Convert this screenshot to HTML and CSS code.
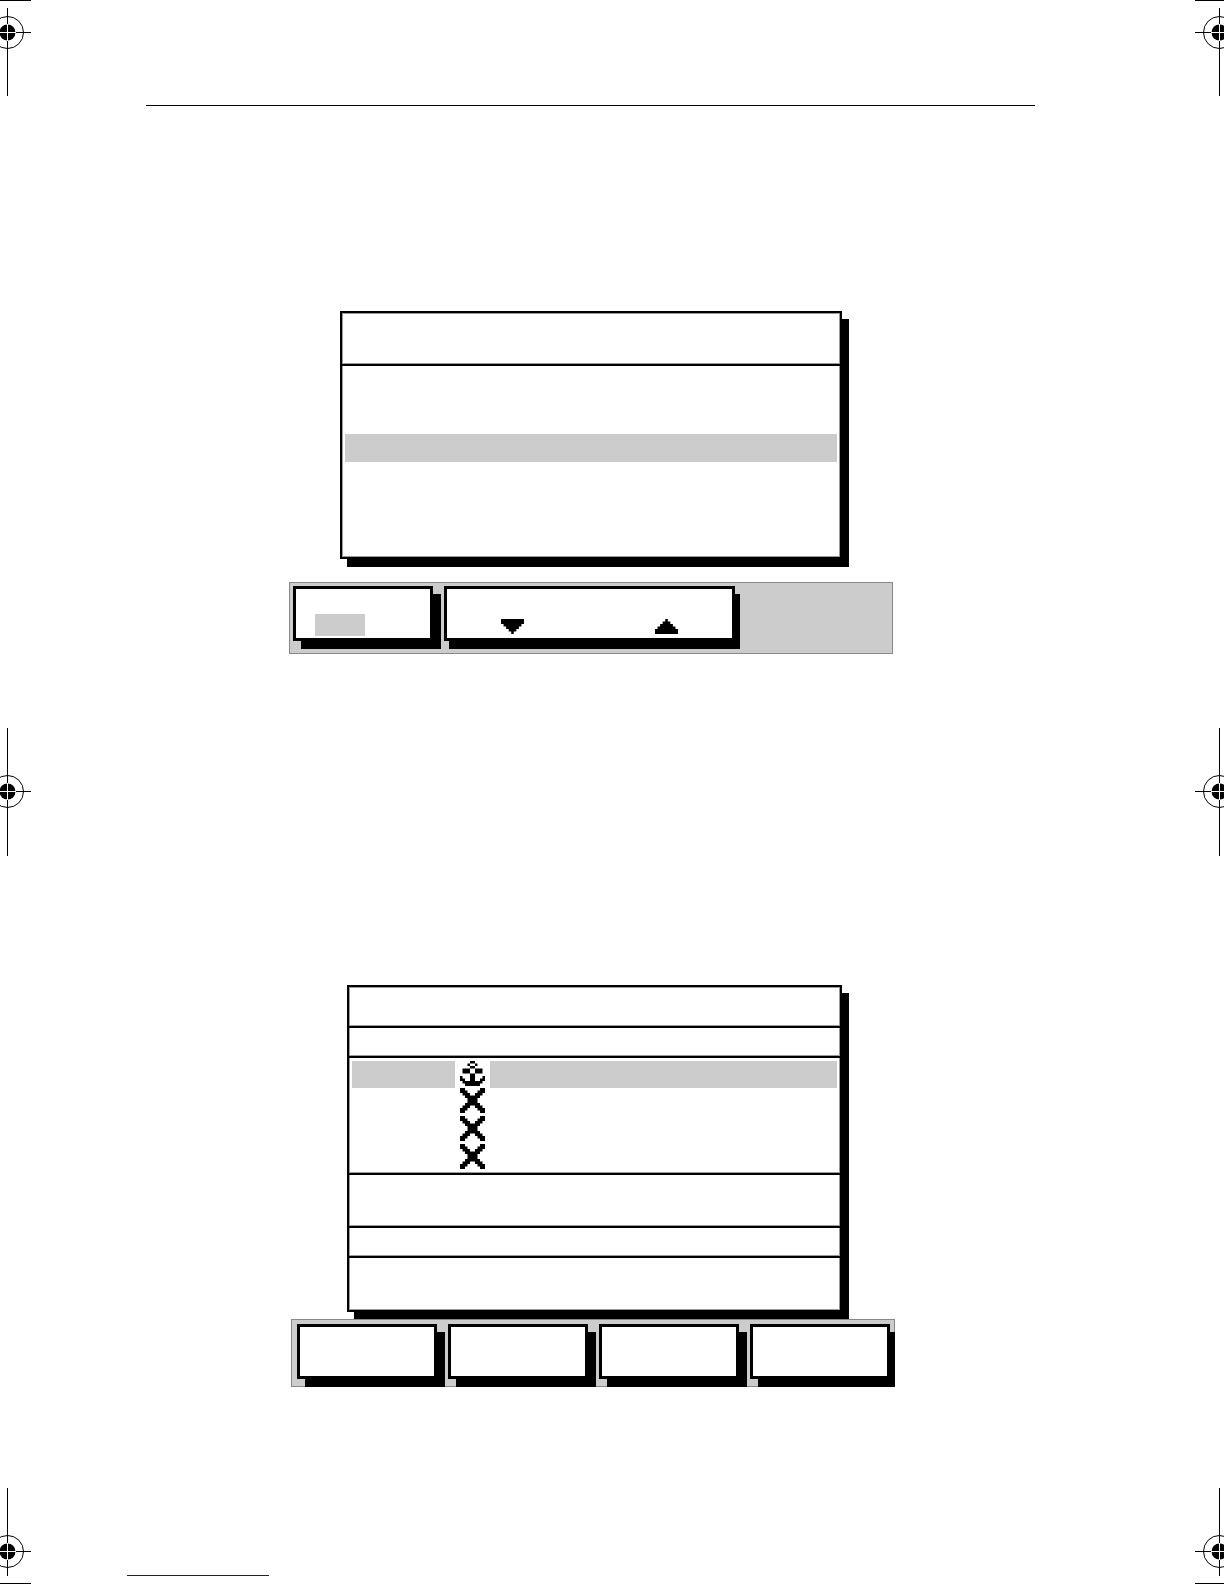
FILE: index.html
```
<!DOCTYPE html>
<html lang="en">
<head>
    <meta charset="UTF-8">
    <meta name="viewport" content="width=device-width, initial-scale=1.0">
    <title>Display Screens</title>
    <link rel="stylesheet" href="styles.css">
</head>
<body>
    <!-- Shared shapes -->
    <svg class="shapes" aria-hidden="true">
        <symbol id="target" overflow="visible">
            <circle cx="0.5" cy="0.5" r="16" fill="none" stroke="#000"/>
            <circle cx="0.5" cy="0.5" r="8"/>
            <path d="M-24 0H-8V1H-24zM9 0H24V1H9z"/>
            <path d="M-8 0H9V1H-8zM0 -8H1V9H0z" fill="#fff"/>
        </symbol>
        <symbol id="cross" viewBox="0 0 10 10">
            <path d="M0 0h2v1h1v1h1v1h2v-1h1v-1h1v-1h2v2h-1v1h-1v1h-1v2h1v1h1v1h1v2h-2v-1h-1v-1h-1v-1h-2v1h-1v1h-1v1h-2v-2h1v-1h1v-1h1v-2h-1v-1h-1v-1h-1z"/>
        </symbol>
    </svg>

    <div class="page">
        <div class="marks">
            <svg width="31" height="96" viewBox="-7 -32 31 96">
                <path d="M-7 -32H24V-31H-7zM0 -24H1V-8H0zM0 9H1V64H0z"/>
                <use href="#target"/>
            </svg>
            <svg width="31" height="128" viewBox="-7 -63 31 128">
                <path d="M0 -63H1V-8H0zM0 9H1V65H0z"/>
                <use href="#target"/>
            </svg>
            <svg width="31" height="96" viewBox="-7 -63 31 96">
                <path d="M-7 32H24V33H-7zM0 -63H1V-8H0zM0 9H1V25H0z"/>
                <use href="#target"/>
            </svg>
        </div>

        <main class="sheet">
            <header class="sheet-header"></header>

            <section class="screen screen-setup">
                <div class="panel">
                    <div class="panel-title"></div>
                    <div class="panel-body">
                        <div class="selected-row"></div>
                    </div>
                </div>
                <div class="softkeys">
                    <button type="button" class="softkey" aria-label="Toggle"><span class="option"></span></button>
                    <button type="button" class="softkey softkey-wide" aria-label="Down or up">
                        <svg class="arrow" viewBox="0 0 9 6" preserveAspectRatio="none"><path d="M0 0H9V2H8V3H7V4H6V5H5V6H4V5H3V4H2V3H1V2H0z"/></svg>
                        <svg class="arrow" viewBox="0 0 9 6" preserveAspectRatio="none"><path d="M0 6H9V4H8V3H7V2H6V1H5V0H4V1H3V2H2V3H1V4H0z"/></svg>
                    </button>
                </div>
            </section>

            <section class="screen screen-list">
                <div class="panel">
                    <div class="list-title"></div>
                    <div class="list-head"></div>
                    <ul class="list">
                        <li class="list-row selected">
                            <svg class="symbol" viewBox="0 0 10 10"><path d="M4 0h2v1h-2zM3 1h1v1h-1zM6 1h1v1h-1zM4 2h2v1h-2zM1 3h3v2h-3zM6 3h3v2h-3zM4 5h2v3h-2zM0 6h1v1h1v1h6v-1h1v-1h1v2h-1v1h-1v1h-6v-1h-1v-1h-1z"/></svg>
                        </li>
                        <li class="list-row"><svg class="symbol"><use href="#cross"/></svg></li>
                        <li class="list-row"><svg class="symbol"><use href="#cross"/></svg></li>
                        <li class="list-row"><svg class="symbol"><use href="#cross"/></svg></li>
                    </ul>
                    <div class="list-detail"></div>
                    <div class="list-head"></div>
                    <div class="list-footer"></div>
                </div>
                <div class="softkeys">
                    <button type="button" class="softkey" aria-label="Key 1"></button>
                    <button type="button" class="softkey" aria-label="Key 2"></button>
                    <button type="button" class="softkey" aria-label="Key 3"></button>
                    <button type="button" class="softkey" aria-label="Key 4"></button>
                </div>
            </section>

            <footer class="sheet-footer">
                <a href="#" class="footer-link" aria-label="Top of page"></a>
            </footer>
        </main>

        <div class="marks">
            <svg width="29" height="96" viewBox="-24 -32 29 96">
                <path d="M-24 -32H5V-31H-24zM0 -24H1V-8H0zM0 9H1V64H0z"/>
                <use href="#target"/>
            </svg>
            <svg width="29" height="128" viewBox="-24 -63 29 128">
                <path d="M0 -63H1V-8H0zM0 9H1V65H0z"/>
                <use href="#target"/>
            </svg>
            <svg width="29" height="96" viewBox="-24 -63 29 96">
                <path d="M-24 32H5V33H-24zM0 -63H1V-8H0zM0 9H1V25H0z"/>
                <use href="#target"/>
            </svg>
        </div>
    </div>
</body>
</html>
```
FILE: styles.css
```
* {
    margin: 0;
    padding: 0;
    box-sizing: border-box;
}

body {
    background-color: #fff;
    font-family: "Liberation Sans", Arial, sans-serif;
}

svg {
    display: block;
}

.shapes {
    position: absolute;
    width: 0;
    height: 0;
}

.page {
    display: grid;
    grid-template-columns: auto 1fr auto;
    min-height: 100vh;
}

/* Registration marks down both edges */
.marks {
    display: flex;
    flex-direction: column;
    justify-content: space-between;
}

.sheet {
    display: flex;
    flex-direction: column;
}

.sheet-header {
    margin: 0 160px 0 115px;
    padding-top: 105px;
    border-bottom: 1px solid #000;
}

.screen {
    width: 604px;
    max-width: 100%;
}

.screen-setup {
    margin: 205px 0 0 258px;
}

.screen-list {
    margin: 331px 0 0 260px;
}

.panel {
    border: 2px solid #000;
    background-color: #fff;
    box-shadow: 7px 8px 0 #000, inset 0 0 0 1px #999;
}

.screen-setup .panel {
    margin: 0 51px 23px;
}

.screen-list .panel {
    margin: 0 53px 7px 56px;
}

.panel-title,
.list-title,
.list-head,
.list,
.list-detail {
    border-bottom: 2px solid #000;
    box-shadow: inset 0 -1px 0 #999;
}

.panel-title {
    height: 53px;
}

.panel-body {
    height: 191px;
    padding: 68px 3px 0;
}

.selected-row {
    height: 28px;
    background-color: #ccc;
}

/* Soft key bar */
.softkeys {
    display: grid;
    grid-template-columns: repeat(4, 1fr);
    column-gap: 11px;
    align-items: start;
    height: 72px;
    padding: 3px 6px 0 3px;
    border: 1px solid #888;
    background-color: #ccc;
}

.screen-list .softkeys {
    height: 68px;
    padding: 4px 4px 0 5px;
    clip-path: inset(0);
}

.softkey {
    display: flex;
    align-items: flex-end;
    height: 55px;
    border: 3px solid #000;
    background-color: #fff;
    box-shadow: 8px 8px 0 #000;
}

.softkey-wide {
    grid-column: span 2;
    gap: 131px;
    padding: 0 0 4px 54px;
    box-shadow: 5px 8px 0 #000;
}

.option {
    width: 50px;
    height: 22px;
    margin: 0 0 2px 19px;
    background-color: #ccc;
}

.arrow {
    width: 23px;
    height: 15px;
}

/* List screen */
.list-title {
    height: 41px;
}

.list-head {
    height: 30px;
}

.list {
    height: 117px;
    padding: 3px 3px 0;
    list-style: none;
}

.list-row {
    height: 28px;
    padding-left: 103px;
}

.selected {
    height: 27px;
    background-color: #ccc;
}

.symbol {
    width: 35px;
    height: 27px;
    padding: 0 5px 2px;
    background-color: #fff;
}

.list-detail {
    height: 53px;
}

.list-footer {
    height: 52px;
}

.sheet-footer {
    margin-top: auto;
    padding: 0 0 8px 96px;
}

.footer-link {
    display: block;
    width: 142px;
    border-bottom: 1px solid #1414a0;
}
```
